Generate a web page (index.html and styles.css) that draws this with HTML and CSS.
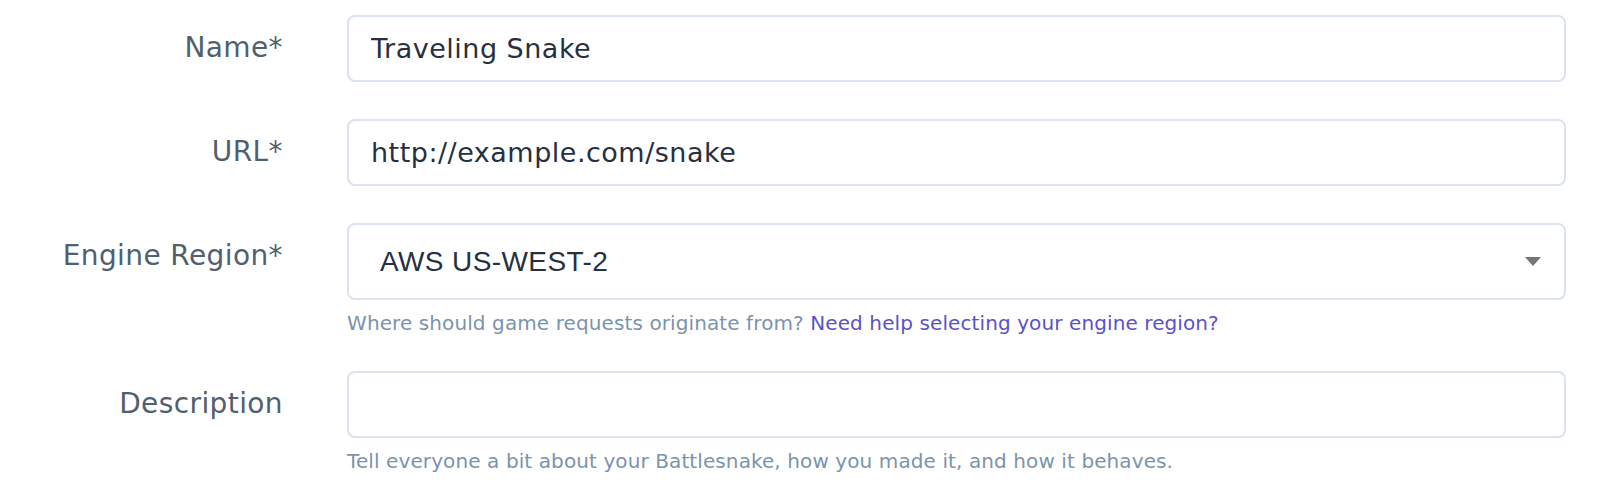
FILE: index.html
```html
<!DOCTYPE html>
<html lang="en">
<head>
<meta charset="utf-8">
<title>Battlesnake form</title>
<link rel="stylesheet" href="styles.css">
</head>
<body>
<form class="form">
  <div class="field">
    <label class="label" for="name">Name*</label>
    <div class="control">
      <input class="input" id="name" type="text" value="Traveling Snake">
    </div>
  </div>
  <div class="field">
    <label class="label" for="url">URL*</label>
    <div class="control">
      <input class="input" id="url" type="text" value="http://example.com/snake">
    </div>
  </div>
  <div class="field">
    <label class="label" for="region">Engine Region*</label>
    <div class="control">
      <div class="select">
        <span class="select-value">AWS US-WEST-2</span>
        <svg class="caret" width="16" height="9" viewBox="0 0 16 9"><path d="M0 0H16L8 9Z" fill="#757575"/></svg>
      </div>
      <p class="help">Where should game requests originate from? <a class="link" href="#">Need help selecting your engine region?</a></p>
    </div>
  </div>
  <div class="field">
    <label class="label" for="desc">Description</label>
    <div class="control">
      <input class="input" id="desc" type="text" value="">
      <p class="help">Tell everyone a bit about your Battlesnake, how you made it, and how it behaves.</p>
    </div>
  </div>
</form>
</body>
</html>
```
FILE: styles.css
```css
html, body {
  margin: 0;
  padding: 0;
  background: #ffffff;
}
body {
  font-family: "DejaVu Sans", sans-serif;
  width: 1598px;
  height: 484px;
  overflow: hidden;
}
.form {
  padding: 15px 32px 0 0;
  display: flex;
  flex-direction: column;
  gap: 37px;
}
.field {
  display: grid;
  grid-template-columns: 283px 1fr;
  column-gap: 64px;
}
.label {
  text-align: right;
  font-size: 28px;
  letter-spacing: 0.4px;
  line-height: 32px;
  padding-top: 17px;
  color: #52606d;
}
.control {
  display: flex;
  flex-direction: column;
}
.input {
  box-sizing: border-box;
  height: 67px;
  width: 100%;
  border: 2px solid #dae3ee;
  border-radius: 8px;
  padding: 0 22px;
  font-family: inherit;
  font-size: 27px;
  letter-spacing: 0.5px;
  color: #27303f;
  background: #fff;
  outline: none;
}
.select {
  box-sizing: border-box;
  height: 77px;
  border: 2px solid #dae3ee;
  border-radius: 8px;
  padding: 0 23px 0 31px;
  display: flex;
  align-items: center;
  justify-content: space-between;
  color: #27303f;
  font-family: "Liberation Sans", Arial, sans-serif;
  font-size: 28px;
  letter-spacing: 0.4px;
}
.help {
  margin: 12px 0 0;
  font-size: 20px;
  letter-spacing: 0.1px;
  line-height: 22px;
  color: #7b93ad;
}
.link {
  color: #5a52c9;
  text-decoration: none;
}
```
